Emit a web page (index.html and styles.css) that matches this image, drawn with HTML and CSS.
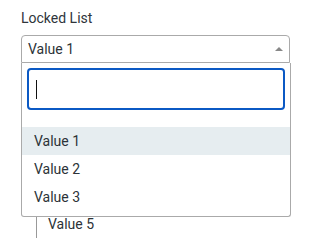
FILE: index.html
```html
<!DOCTYPE html>
<html lang="en">
<head>
<meta charset="utf-8">
<title>Locked List</title>
<link rel="stylesheet" href="styles.css">
</head>
<body>
<div class="field">
  <div class="label">Locked List</div>
  <div class="select-wrap">
    <div class="select">
      <span class="select-value">Value 1</span>
      <span class="arrow"></span>
    </div>
    <div class="dropdown">
      <div class="search">
        <div class="search-box"><span class="caret"></span></div>
      </div>
      <ul class="results">
        <li class="option highlighted">Value 1</li>
        <li class="option">Value 2</li>
        <li class="option">Value 3</li>
      </ul>
    </div>
  </div>
  <ul class="behind">
    <li>Value 5</li>
  </ul>
</div>
</body>
</html>
```
FILE: styles.css
```css
html, body {
  margin: 0;
  padding: 0;
  background: #fff;
  overflow: hidden;
}
body {
  font-family: Roboto, "Noto Sans", sans-serif;
  font-size: 14px;
  color: #2c3338;
}
.field {
  padding: 10px 0 0 21px;
}
.label {
  line-height: 16px;
  height: 16px;
  margin-bottom: 9px;
  color: #2f353b;
}
.select-wrap {
  position: relative;
  width: 269px;
}
.select {
  box-sizing: border-box;
  height: 28px;
  border: 1px solid #aaa;
  border-radius: 4px 4px 0 0;
  padding: 0 6px 0 6px;
  line-height: 26px;
  display: flex;
  align-items: center;
  justify-content: space-between;
}
.arrow {
  width: 0;
  height: 0;
  border-style: solid;
  border-width: 0 4px 4px 4px;
  border-color: transparent transparent #888 transparent;
}
.dropdown {
  position: absolute;
  left: 0;
  top: 100%;
  width: 270px;
  height: 154px;
  box-sizing: border-box;
  border: 1px solid #aaa;
  border-top: none;
  border-radius: 0 0 3px 3px;
  background: #fff;
  z-index: 2;
}
.search {
  padding: 5px 5px 0 5px;
}
.search-box {
  box-sizing: border-box;
  height: 42px;
  border: 2px solid #0b59c4;
  border-radius: 4px;
  padding-left: 7px;
  display: flex;
  align-items: center;
}
.caret {
  display: block;
  width: 1px;
  height: 19px;
  background: #111;
}
.results {
  list-style: none;
  margin: 0;
  padding: 17px 0 0 0;
}
.option {
  height: 28px;
  line-height: 28px;
  padding-left: 12px;
}
.highlighted {
  background: #e6edf0;
}
.behind {
  list-style: none;
  margin: 147px 0 0 15px;
  padding: 0 0 0 11px;
  border-left: 1px solid #999;
}
.behind li {
  line-height: 28px;
  height: 28px;
}
```
